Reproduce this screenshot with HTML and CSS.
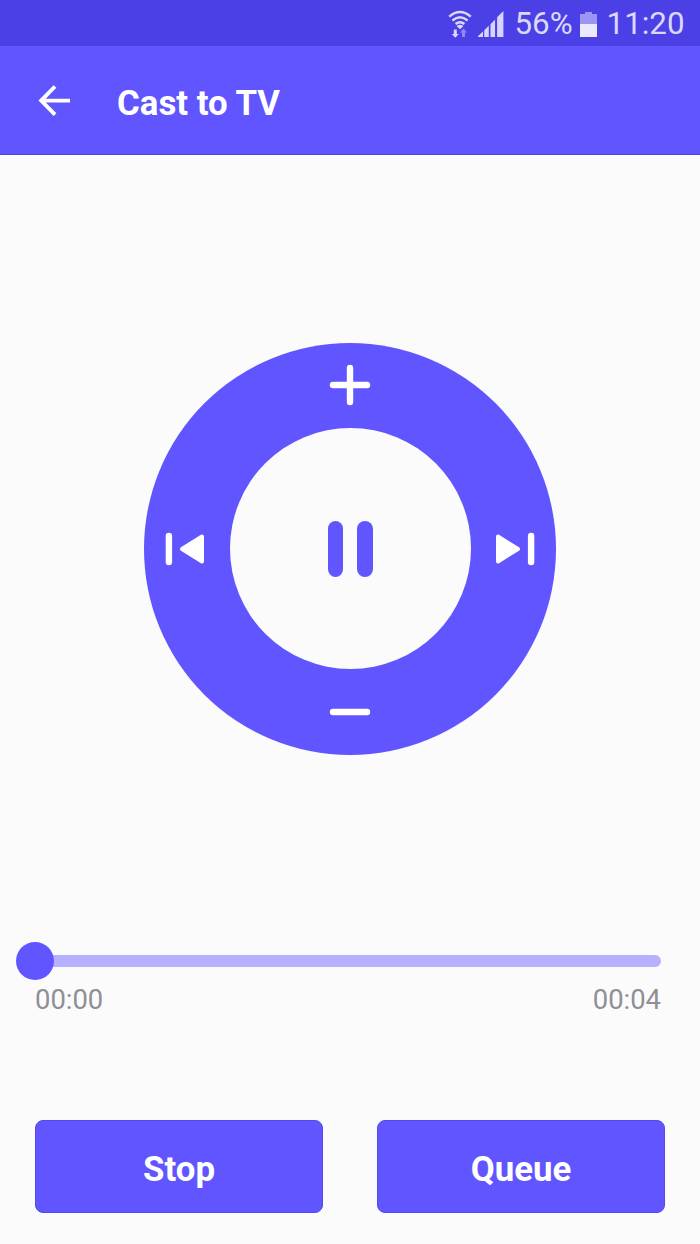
FILE: index.html
```
<!DOCTYPE html>
<html lang="en">
<head>
    <meta charset="UTF-8">
    <meta name="viewport" content="width=device-width, initial-scale=1.0">
    <title>Cast to TV</title>
    <link rel="stylesheet" href="styles.css">
</head>
<body>
    <div class="status">
        <svg class="wifi" width="24" height="28" viewBox="0 0 24 28">
            <g fill="none" stroke="#dbd8fc" stroke-width="2.3">
                <path d="M1.2 6.7Q12 -2.7 22.8 6.7"/>
                <path d="M4.4 10.5Q12 4.1 19.6 10.5"/>
                <path d="M7.6 14Q12 10.4 16.4 14"/>
            </g>
            <path d="M8.6 16Q12 13.6 15.4 16L12 19.2z" fill="#dbd8fc"/>
            <path d="M5.8 19.500h3v4.500h2l-3.500 3.800L3.800 24h2z" fill="#dbd8fc"/>
            <path d="M14 27v-4.500h-2l3.500-3.900 3.500 3.900h-2V27z" fill="#8f87f3"/>
        </svg>
        <svg class="signal" width="26" height="26" viewBox="0 0 26 26" fill="#d6d3fc">
            <path d="M0 26v-1l5-4.500V26zM6.200 26v-6.700l4.600-4.500V26zM12.500 26V13.200l4.600-4.700V26zM18.800 26V6.500L25.400 0v26z"/>
            <path d="M18.300 5v21" stroke="#4b40e6" stroke-width="1.600"/>
        </svg>
        <span class="percent">56%</span>
        <svg class="battery" width="17" height="25" viewBox="0 0 17 25">
            <path d="M0 12V2h5V0h7v2h5v10z" fill="#9c95f3"/>
            <path d="M0 12h17v13H0z" fill="#ebe9fd"/>
        </svg>
        <span class="clock">11:20</span>
    </div>

    <header class="toolbar">
        <svg width="32" height="32" viewBox="0 0 32 32" fill="none" stroke="#fff" stroke-width="3.900">
            <path d="M17 1.500 3.200 15.600 17 29.700M3.200 15.600H32"/>
        </svg>
        <h1>Cast to TV</h1>
    </header>

    <main>
        <div class="dial">
            <svg class="plus" width="42" height="42" viewBox="0 0 42 42">
                <path d="M21 4v34M4 21h34"/>
            </svg>
            <svg class="prev" width="40" height="34" viewBox="0 0 40 34">
                <path d="M3.900 4v26"/>
                <path class="arrow" d="M17 17 37 4.500v25z"/>
            </svg>
            <div class="center">
                <span class="bar"></span>
                <span class="bar"></span>
            </div>
            <svg class="next" width="40" height="34" viewBox="0 0 40 34">
                <path d="M36.100 4v26"/>
                <path class="arrow" d="M23 17 3 4.500v25z"/>
            </svg>
            <svg class="minus" width="42" height="42" viewBox="0 0 42 42">
                <path d="M4 21h34"/>
            </svg>
        </div>
    </main>

    <section class="progress">
        <div class="track">
            <div class="thumb"></div>
        </div>
        <div class="times">
            <span>00:00</span>
            <span>00:04</span>
        </div>
    </section>

    <footer class="actions">
        <button>Stop</button>
        <button>Queue</button>
    </footer>
</body>
</html>
```
FILE: styles.css
```
*{
    margin: 0;
    padding: 0;
    box-sizing: border-box;
}
body{
    height: 1244px;
    display: flex;
    flex-direction: column;
    background-color: #fbfbfb;
    font-family: Roboto, sans-serif;
    overflow: hidden;
}
svg{
    display: block;
    flex: none;
}
.status{
    height: 46px;
    display: flex;
    align-items: center;
    justify-content: flex-end;
    padding: 2px 15.5px 0 0;
    background-color: #4b40e6;
    color: #dbd8fc;
    font-size: 31.3px;
    line-height: 44px;
}
.signal{
    margin: 0 10px 0 6px;
}
.battery{
    margin: 0 10px 0 7px;
}
.toolbar{
    height: 109px;
    display: flex;
    align-items: center;
    padding: 2px 0 0 38px;
    background-color: #6055ff;
    border-bottom: 1px solid #4d42e4;
    color: #fff;
}
.toolbar h1{
    margin-left: 47px;
    padding-top: 3px;
    font-size: 34.8px;
    font-weight: bold;
}
main{
    height: 787px;
    display: flex;
    align-items: center;
    justify-content: center;
}
.dial{
    width: 412px;
    height: 412px;
    display: grid;
    grid-template-columns: 85.5px 241px 85.5px;
    grid-template-rows: 85.5px 241px 85.5px;
    align-items: center;
    justify-items: center;
    border-radius: 50%;
    background-color: #6055ff;
}
.dial svg{
    fill: none;
    stroke: #fff;
    stroke-width: 6.4;
    stroke-linecap: round;
    stroke-linejoin: round;
}
.dial .arrow{
    fill: #fff;
    stroke-width: 4;
}
.plus, .minus{
    grid-column: 2;
}
.prev{
    grid-column: 1;
    margin-right: 4px;
}
.next{
    margin-left: 4px;
}
.center{
    width: 241px;
    height: 241px;
    display: flex;
    align-items: center;
    justify-content: center;
    gap: 14px;
    border-radius: 50%;
    background-color: #fbfbfb;
}
.bar{
    width: 15.5px;
    height: 56px;
    border-radius: 8px;
    background-color: #6055ff;
}
.progress{
    height: 178px;
    padding: 13px 39px 0 35px;
}
.track{
    height: 12px;
    display: flex;
    align-items: center;
    border-radius: 6px;
    background-color: #b6b0ff;
}
.thumb{
    width: 38px;
    height: 38px;
    flex: none;
    margin-left: -19px;
    border-radius: 50%;
    background-color: #6055ff;
}
.times{
    display: flex;
    justify-content: space-between;
    margin-top: 17px;
    color: #8f8f97;
    font-size: 27.4px;
    line-height: 32px;
}
.actions{
    display: flex;
    gap: 54px;
    padding: 0 35px;
}
.actions button{
    flex: 1;
    height: 93px;
    border: 1px solid #5248ed;
    border-radius: 8px;
    background-color: #6055ff;
    color: #fff;
    font-family: inherit;
    font-size: 34.8px;
    font-weight: bold;
    padding-top: 4px;
}
```
